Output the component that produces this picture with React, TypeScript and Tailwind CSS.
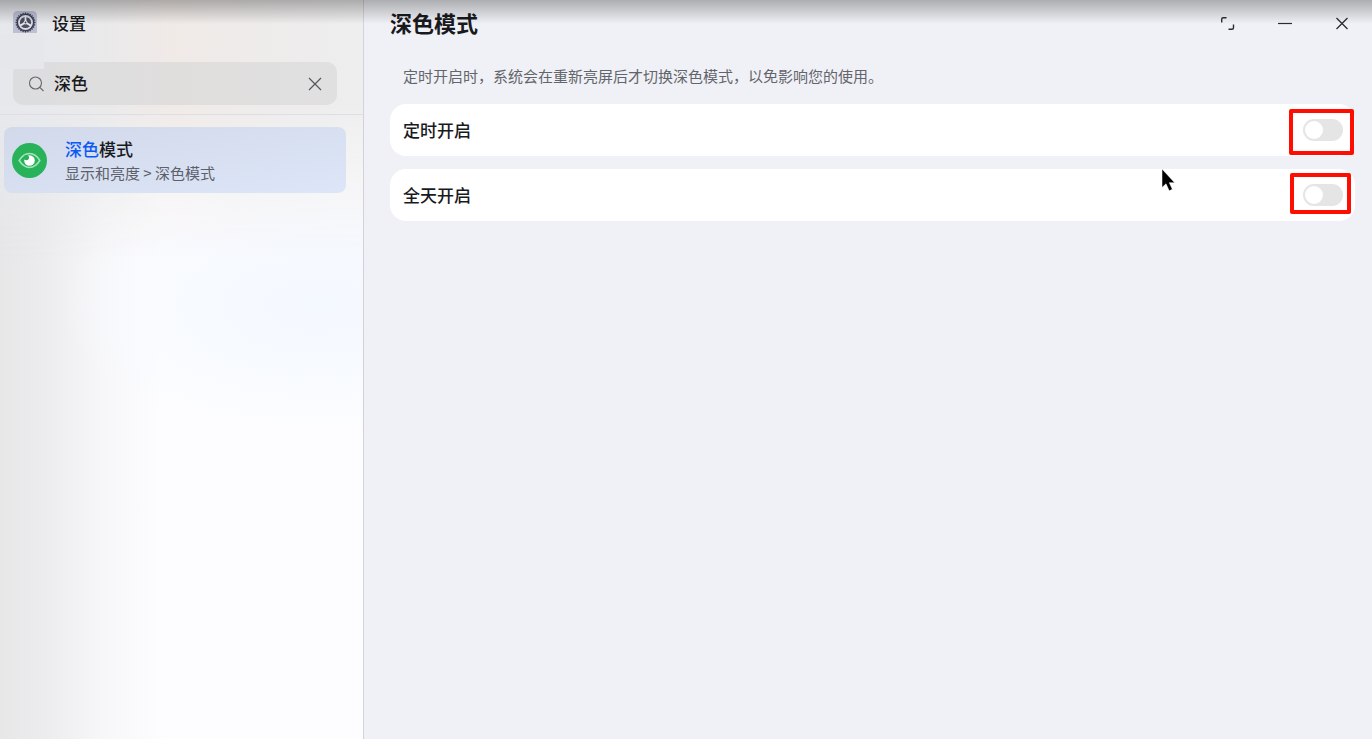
import { useState } from 'react';
import { clsx } from 'clsx';

const GEAR_TEETH = Array.from({ length: 24 }, (_, i) => i * 15);

export default function App() {
  const [query, setQuery] = useState('深色');

  return (
    <div className="relative flex min-h-screen bg-[#f0f1f6] font-['Noto_Sans_CJK_SC',sans-serif] text-[#191a1d]">
      <aside className="relative w-[364px] shrink-0 border-r border-[#d2d3d6] bg-[#fdfdff] bg-[radial-gradient(ellipse_260px_130px_at_320px_305px,#f4f8ff_0%,#f7faff_50%,transparent_100%),linear-gradient(to_right,#e7e7e8_0%,#ececee_12%,#f7f7f9_28%,transparent_45%)]">
        {/* Warme gloed achter de kop, loopt naar beneden weg */}
        <div className="absolute inset-x-0 top-0 h-[260px] bg-[linear-gradient(to_right,#e6e8ec_0%,#e9e9eb_25%,#f0eae7_48%,#eeebea_65%,#eeeeee_100%)] [mask-image:linear-gradient(to_bottom,black_0%,black_40%,transparent_100%)]" />

        <div className="relative">
          <header className="flex h-[62px] items-start gap-[15px] pl-[13px]">
            <SettingsIcon />
            <h1 className="mt-[11px] text-[17px] leading-6 font-medium">设置</h1>
          </header>

          <div className="border-b border-[#dedfe2] pr-[26px] pb-[9px] pl-[13px]">
            <div className="relative">
              <label className="flex h-[43px] items-center rounded-[10px] bg-linear-to-r from-[#dcdddf] via-[#e0dedd] to-[#e0e0e0] pr-[14px] pl-[15px]">
                <SearchIcon />
                <input
                  type="text"
                  className="ml-[10px] h-6 min-w-0 flex-1 bg-transparent pb-[2px] text-[17px] leading-[22px] font-medium outline-none"
                  value={query}
                  onChange={(e) => setQuery(e.target.value)}
                  aria-label="搜索设置"
                />
                <button type="button" onClick={() => setQuery('')} aria-label="清除">
                  <svg className="h-4 w-4" viewBox="0 0 16 16" fill="none" stroke="#55565a" strokeWidth="1.2">
                    <path d="M2 2l12 12M14 2L2 14" />
                  </svg>
                </button>
              </label>
              <div className="absolute -top-7 -left-[13px] h-[35px] w-[44px] bg-[#e5e7eb]" />
            </div>
          </div>

          <nav className="pt-3 pr-[17px] pl-1">
            <a
              href="#dark-mode"
              className="flex h-[66px] items-center rounded-lg bg-linear-to-br from-[#d1d9ea] to-[#dde6f8] pl-2"
            >
              <EyeIcon />
              <span className="mt-[2px] ml-[18px]">
                <span className="block text-[17px] leading-6 font-medium">
                  <span className="text-[#0a59f7]">深色</span>模式
                </span>
                <span className="block text-[15px] leading-6 text-[#5c606b]">显示和亮度 &gt; 深色模式</span>
              </span>
            </a>
          </nav>
        </div>
      </aside>

      <main className="min-w-0 flex-1 pr-[17px] pl-[26px]">
        <header className="flex h-12 items-start justify-between">
          <h2 className="mt-[6px] text-[22px] leading-8 font-bold">深色模式</h2>
          <WindowControls />
        </header>

        <p className="mt-[15px] pb-4 pl-[13px] text-[15px] leading-[25px] text-[#63656c]">
          定时开启时，系统会在重新亮屏后才切换深色模式，以免影响您的使用。
        </p>

        <div className="space-y-[13px]">
          <SwitchRow id="scheduled" label="定时开启" frame="-top-[10px] -right-[11px] -bottom-[14px] -left-[14px]" />
          <SwitchRow id="all-day" label="全天开启" frame="-top-[11px] -right-2 -bottom-2 -left-[13px]" />
        </div>
      </main>

      <div className="pointer-events-none absolute inset-x-0 top-0 h-6 bg-linear-to-b from-black/28 to-transparent" />

      <svg
        className="pointer-events-none absolute top-[168px] right-[196px] h-6 w-[15px]"
        viewBox="0 0 15 24"
        fill="#000"
        stroke="#fff"
        strokeWidth="0.5"
      >
        <path d="M1 1v18.5l4-3.7 3.2 7 3.2-1.5-3.1-6.6h5.4z" />
      </svg>
    </div>
  );
}

function SwitchRow({ id, label, frame }: { id: string; label: string; frame: string }) {
  const [on, setOn] = useState(false);

  return (
    <div className="flex h-[52px] items-center justify-between rounded-[16px] bg-white pr-3 pl-[13px]">
      <label htmlFor={id} className="text-[17px] leading-6 font-medium">
        {label}
      </label>
      <div className="relative h-[22px] w-10">
        <input
          id={id}
          type="checkbox"
          role="switch"
          className="block h-[22px] w-10 appearance-none rounded-full bg-[#e5e5e6] checked:bg-[#0a59f7]"
          checked={on}
          onChange={(e) => setOn(e.target.checked)}
        />
        <span
          className={clsx(
            'pointer-events-none absolute top-[2px] h-[18px] w-[18px] rounded-full bg-white',
            on ? 'right-[2px]' : 'left-[2px]',
          )}
        />
        <span className={clsx('pointer-events-none absolute rounded-[2px] border-4 border-[#ff0d00]', frame)} />
      </div>
    </div>
  );
}

function WindowControls() {
  return (
    <div className="mt-4 flex gap-[41px] pr-[5px] text-[#2b2c30]">
      <button type="button" aria-label="全屏">
        <svg className="h-4 w-4" viewBox="0 0 16 16" fill="none" stroke="currentColor" strokeWidth="1.4">
          <path d="M1.7 6.5V3.2Q1.7 1.7 3.2 1.7H6.5M13.5 8.5v3.3q0 1.5-1.5 1.5H8.5" />
        </svg>
      </button>
      <button type="button" aria-label="最小化">
        <svg className="h-4 w-4" viewBox="0 0 16 16" fill="none" stroke="currentColor" strokeWidth="1.2">
          <path d="M1 7.5h14" />
        </svg>
      </button>
      <button type="button" aria-label="关闭">
        <svg className="h-4 w-4" viewBox="0 0 16 16" fill="none" stroke="currentColor" strokeWidth="1.3">
          <path d="M2.5 2l11 11M13.5 2l-11 11" />
        </svg>
      </button>
    </div>
  );
}

function SearchIcon() {
  return (
    <svg className="h-4 w-4" viewBox="0 0 16 16" fill="none" stroke="#66676b" strokeWidth="1.1" aria-hidden="true">
      <circle cx="7.5" cy="7" r="6" />
      <path d="M11.8 11.3l3.7 3.7" />
    </svg>
  );
}

function SettingsIcon() {
  return (
    <svg className="mt-[10px] h-6 w-6" viewBox="0 0 24 24" fill="none" aria-hidden="true">
      <path d="M5 1h14q5 0 5 5v17H0V6q0-5 5-5z" fill="#bdbfd5" />
      <g stroke="#3a3e50" strokeWidth="1.3">
        {GEAR_TEETH.map((angle) => (
          <path key={angle} d="M12.5 2.5v1.8" transform={`rotate(${angle} 12.5 12.5)`} />
        ))}
      </g>
      <circle cx="12.5" cy="12.5" r="8.2" fill="#d9dae6" stroke="#3a3e50" strokeWidth="1.5" />
      {/* Drie donkere vlakken, gescheiden door lichte spaken */}
      <circle cx="12.5" cy="12.5" r="5.6" fill="#4b4f61" />
      <path d="M12.5 12.5V6.5M12.5 12.5l-5.4 3.1M12.5 12.5l5.400 3.100" stroke="#e6e7ef" strokeWidth="1.8" />
      <circle cx="12.5" cy="12.5" r="1.9" fill="#e6e7ef" />
      <circle cx="12.5" cy="12.5" r="0.9" fill="#3a3e50" />
    </svg>
  );
}

function EyeIcon() {
  return (
    <svg className="h-[35px] w-[35px]" viewBox="0 0 35 35" aria-hidden="true">
      <circle cx="17.5" cy="17.5" r="17.5" fill="#28b259" />
      <path
        d="M7.2 17.5Q11.5 10.6 17.5 10.6T27.800 17.5Q23.500 24.400 17.500 24.400T7.200 17.500z"
        fill="none"
        stroke="#a8e3bc"
        strokeWidth="1.5"
      />
      <circle cx="17.5" cy="17.5" r="5.3" fill="#fff" />
      <circle cx="14.3" cy="14.6" r="2.700" fill="#28b259" />
    </svg>
  );
}
